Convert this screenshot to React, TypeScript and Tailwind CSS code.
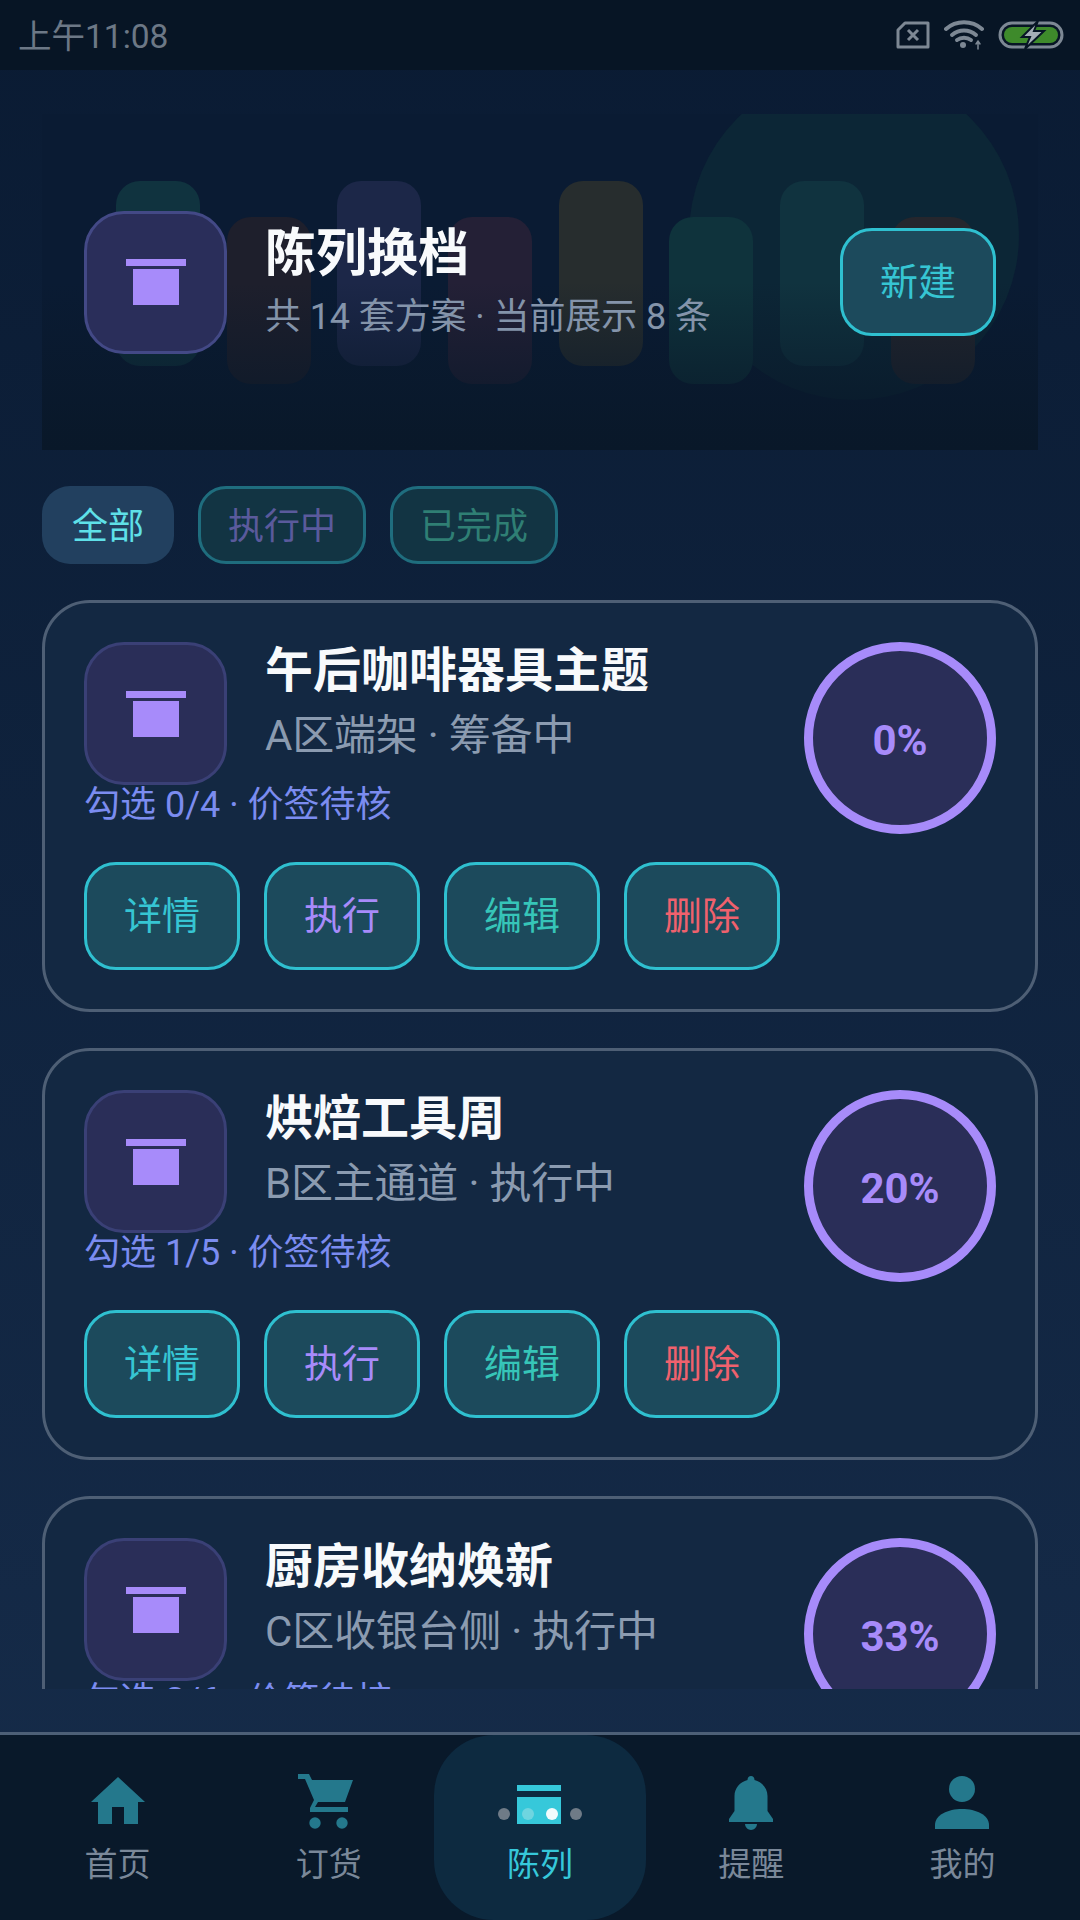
import React from "react";

const font = { fontFamily: '"Roboto", "Noto Sans CJK SC", sans-serif' };

function BoxIcon({ box = "bg-[#2a2e58] border-[#3a4076]" }: { box?: string }) {
  return (
    <div className={`w-[143px] h-[143px] shrink-0 rounded-[40px] border-[3px] flex items-center justify-center ${box}`}>
      <svg width="60" height="46" viewBox="0 0 60 46" fill="#a78bfa">
        <rect x="0" y="0" width="60" height="7" />
        <rect x="7" y="10" width="46" height="36" />
      </svg>
    </div>
  );
}

function ActionButton({ label, color }: { label: string; color: string }) {
  return (
    <div className={`w-[156px] h-[108px] rounded-[32px] border-[3px] border-[#2fc0d0] bg-[#1c4a5c] flex items-center justify-center text-[38px] ${color}`}>
      {label}
    </div>
  );
}

function Card({ title, sub, meta, pct }: { title: string; sub: string; meta: string; pct: string }) {
  return (
    <div className="h-[412px] shrink-0 rounded-[48px] border-[3px] border-[#4e5f75] bg-[#132842] p-[39px] flex justify-between">
      <div className="flex flex-col">
        <div className="flex gap-[38px]">
          <BoxIcon />
          <div className="flex flex-col pt-[1px]">
            <div className="text-[48px] leading-[56px] font-bold text-[#f8fafc] whitespace-nowrap">{title}</div>
            <div className="text-[42px] leading-[54px] mt-[10px] tracking-[-0.2px] text-[#8b9bb0] whitespace-nowrap">{sub}</div>
          </div>
        </div>
        <div className="text-[36px] leading-[38px] pt-[1px] h-[38px] text-[#7b8cf0] whitespace-nowrap">{meta}</div>
        <div className="flex gap-[24px] mt-[39px]">
          <ActionButton label="详情" color="text-[#36c5d3]" />
          <ActionButton label="执行" color="text-[#a78bfa]" />
          <ActionButton label="编辑" color="text-[#36c5b8]" />
          <ActionButton label="删除" color="text-[#f0616d]" />
        </div>
      </div>
      <div className="w-[192px] h-[192px] shrink-0 rounded-full border-[9px] border-[#a78bfa] bg-[#2a2e58] flex items-center justify-center pt-[5px] text-[42px] font-bold text-[#a78bfa]">
        {pct}
      </div>
    </div>
  );
}

function StatusIcons() {
  return (
    <div className="flex items-center gap-[14px]">
      <svg width="34" height="28" viewBox="0 0 34 28" fill="none" stroke="#7d8894" strokeWidth="3">
        <path d="M9 2 H32 V26 H2 V9 Z" strokeLinejoin="round" />
        <path d="M12 9 L22 19 M22 9 L12 19" strokeWidth="3" />
      </svg>
      <svg width="40" height="30" viewBox="0 0 40 30" fill="none" stroke="#7d8894" strokeWidth="4" strokeLinecap="round">
        <path d="M2 9 C12 0 28 0 38 9" />
        <path d="M8 15 C15 9 25 9 32 15" />
        <path d="M13 20 C17 17 23 17 27 20" />
        <circle cx="19" cy="25" r="3" fill="#7d8894" stroke="none" />
        <path d="M34 21 V29 M32 24 L34 21 L36 24" strokeWidth="1.5" />
      </svg>
      <svg width="66" height="28" viewBox="0 0 66 28">
        <rect x="2" y="2" width="62" height="24" rx="12" fill="none" stroke="#7d8894" strokeWidth="3" />
        <rect x="6" y="6" width="54" height="16" rx="8" fill="#3e8a2b" />
        <path d="M40 0 L24 16 H32 L27 28 L46 10 H36 Z" fill="#a5aeb8" stroke="#071525" strokeWidth="2" />
      </svg>
    </div>
  );
}

function NavItem({ label, children }: { label: string; children: React.ReactNode }) {
  return (
    <div className="flex-1 flex flex-col items-center pt-[32px]">
      <div className="h-[66px] flex items-center justify-center">{children}</div>
      <div className="text-[33px] leading-[44px] mt-[10px] text-[#7a8899]">{label}</div>
    </div>
  );
}

const bars = [
  { c: "bg-[#10333f]", m: "mt-[67px] h-[185px]" },
  { c: "bg-[#1e1f2c]", m: "mt-[103px] h-[167px]" },
  { c: "bg-[#1c2748]", m: "mt-[67px] h-[185px]" },
  { c: "bg-[#242036]", m: "mt-[103px] h-[167px]" },
  { c: "bg-[#272d2e]", m: "mt-[67px] h-[185px]" },
  { c: "bg-[#0f333c]", m: "mt-[103px] h-[167px]" },
  { c: "bg-[#10333f]", m: "mt-[67px] h-[185px]" },
  { c: "bg-[#25262d]", m: "mt-[103px] h-[167px]" },
];

export default function App() {
  return (
    <div className="w-[1080px] h-[1920px] flex flex-col overflow-hidden bg-gradient-to-b from-[#0a1b33] to-[#162c4a]" style={font}>
      <div className="h-[70px] shrink-0 bg-[#071525] flex items-center justify-between pl-[18px] pr-[16px]">
        <span className="text-[33.5px] pt-[4px] text-[#6c7886]">上午11:08</span>
        <StatusIcons />
      </div>

      <div className="h-[1619px] shrink-0 overflow-hidden px-[42px] pt-[44px] flex flex-col">
        <div className="relative h-[336px] shrink-0 overflow-hidden bg-[#0a1b33] flex items-center px-[42px]">
          <div className="absolute w-[330px] h-[330px] rounded-full bg-[#0c2636] left-[647px] top-[-44px]" />
          <div className="absolute inset-0 flex items-start gap-[26.7px] pl-[74px]">
            {bars.map((b, i) => (
              <div key={i} className={`w-[84px] rounded-[24px] ${b.c} ${b.m}`} />
            ))}
          </div>
          <div className="absolute inset-0 bg-gradient-to-b from-transparent via-transparent to-[#091829]" />
          <div className="relative flex items-center w-full">
            <BoxIcon box="bg-[#2a2e5a] border-[#434986]" />
            <div className="ml-[38px] flex flex-col flex-1 pt-[3px]">
              <div className="text-[51px] leading-[56px] font-bold text-[#f8fafc]">陈列换档</div>
              <div className="text-[36px] leading-[50px] mt-[10px] tracking-[-0.1px] text-[#8494aa]">共 14 套方案 · 当前展示 8 条</div>
            </div>
            <div className="w-[156px] h-[108px] rounded-[32px] border-[3px] border-[#2fc0d0] bg-[#1c4a5c] flex items-center justify-center text-[38px] text-[#36c5d3]">
              新建
            </div>
          </div>
        </div>

        <div className="flex gap-[24px] mt-[36px] shrink-0 text-[36px] leading-[50px]">
          <div className="w-[132px] h-[78px] rounded-[28px] bg-[#22405f] flex items-center justify-center pt-[3px] text-[#5fe0e8]">全部</div>
          <div className="w-[168px] h-[78px] rounded-[28px] border-[3px] border-[#1f6d7e] bg-[#123443] flex items-center justify-center pt-[3px] text-[#5a5a9c]">执行中</div>
          <div className="w-[168px] h-[78px] rounded-[28px] border-[3px] border-[#1f6d7e] bg-[#123443] flex items-center justify-center pt-[3px] text-[#2f7f74]">已完成</div>
        </div>

        <div className="flex flex-col gap-[36px] mt-[36px]">
          <Card title="午后咖啡器具主题" sub="A区端架 · 筹备中" meta="勾选 0/4 · 价签待核" pct="0%" />
          <Card title="烘焙工具周" sub="B区主通道 · 执行中" meta="勾选 1/5 · 价签待核" pct="20%" />
          <Card title="厨房收纳焕新" sub="C区收银台侧 · 执行中" meta="勾选 2/6 · 价签待核" pct="33%" />
        </div>
      </div>

      <div className="flex-1" />

      <div className="h-[188px] shrink-0 border-t-[3px] border-[#4d6077] bg-[#09192a] flex px-[12px]">
        <NavItem label="首页">
          <svg width="66" height="66" viewBox="0 0 66 66" fill="#24788c">
            <path fillRule="evenodd" d="M33 10 L60 35 H53 V57 H39 V40 H27 V57 H13 V35 H6 Z" />
          </svg>
        </NavItem>
        <NavItem label="订货">
          <svg width="66" height="66" viewBox="0 0 66 66" fill="#24788c">
            <path d="M2 7 H13 L16 13 H57 L49 35 H22 L19 40 H52 V45 H14 V41 L18 33 L9 12 H2 Z" />
            <circle cx="19" cy="56" r="5.7" />
            <circle cx="46" cy="56" r="5.7" />
          </svg>
        </NavItem>
        <div className="flex-1 flex flex-col items-center pt-[32px] rounded-[60px] bg-[#0d2a40]">
          <div className="h-[66px] flex items-center justify-center">
            <svg width="84" height="66" viewBox="0 0 84 66">
              <rect x="19" y="18" width="44" height="6" fill="#36c8da" />
              <rect x="19" y="30" width="44" height="27" fill="#36c8da" />
              <circle cx="6" cy="47" r="6" fill="#6f7b87" />
              <circle cx="30" cy="47" r="6" fill="#6fd5e0" />
              <circle cx="54" cy="47" r="6" fill="#f2fbfd" />
              <circle cx="78" cy="47" r="6" fill="#6f7b87" />
            </svg>
          </div>
          <div className="text-[33px] leading-[44px] mt-[10px] text-[#36c8da]">陈列</div>
        </div>
        <NavItem label="提醒">
          <svg width="66" height="66" viewBox="0 0 66 66" fill="#24788c">
            <path d="M33 9 C35 9 36.5 10.5 36.5 13 C44 15 49.5 21 49.5 29 V44 L55 52 V55 H11 V52 L16.5 44 V29 C16.5 21 22 15 29.5 13 C29.5 10.5 31 9 33 9 Z" />
            <path d="M27 57 H39 C39 60 36 63 33 63 C30 63 27 60 27 57 Z" />
          </svg>
        </NavItem>
        <NavItem label="我的">
          <svg width="68" height="66" viewBox="0 0 68 66" fill="#24788c">
            <circle cx="34" cy="22" r="13" />
            <path d="M7 62 V58 C7 48 20 42 34 42 C48 42 61 48 61 58 V62 Z" />
          </svg>
        </NavItem>
      </div>
    </div>
  );
}
